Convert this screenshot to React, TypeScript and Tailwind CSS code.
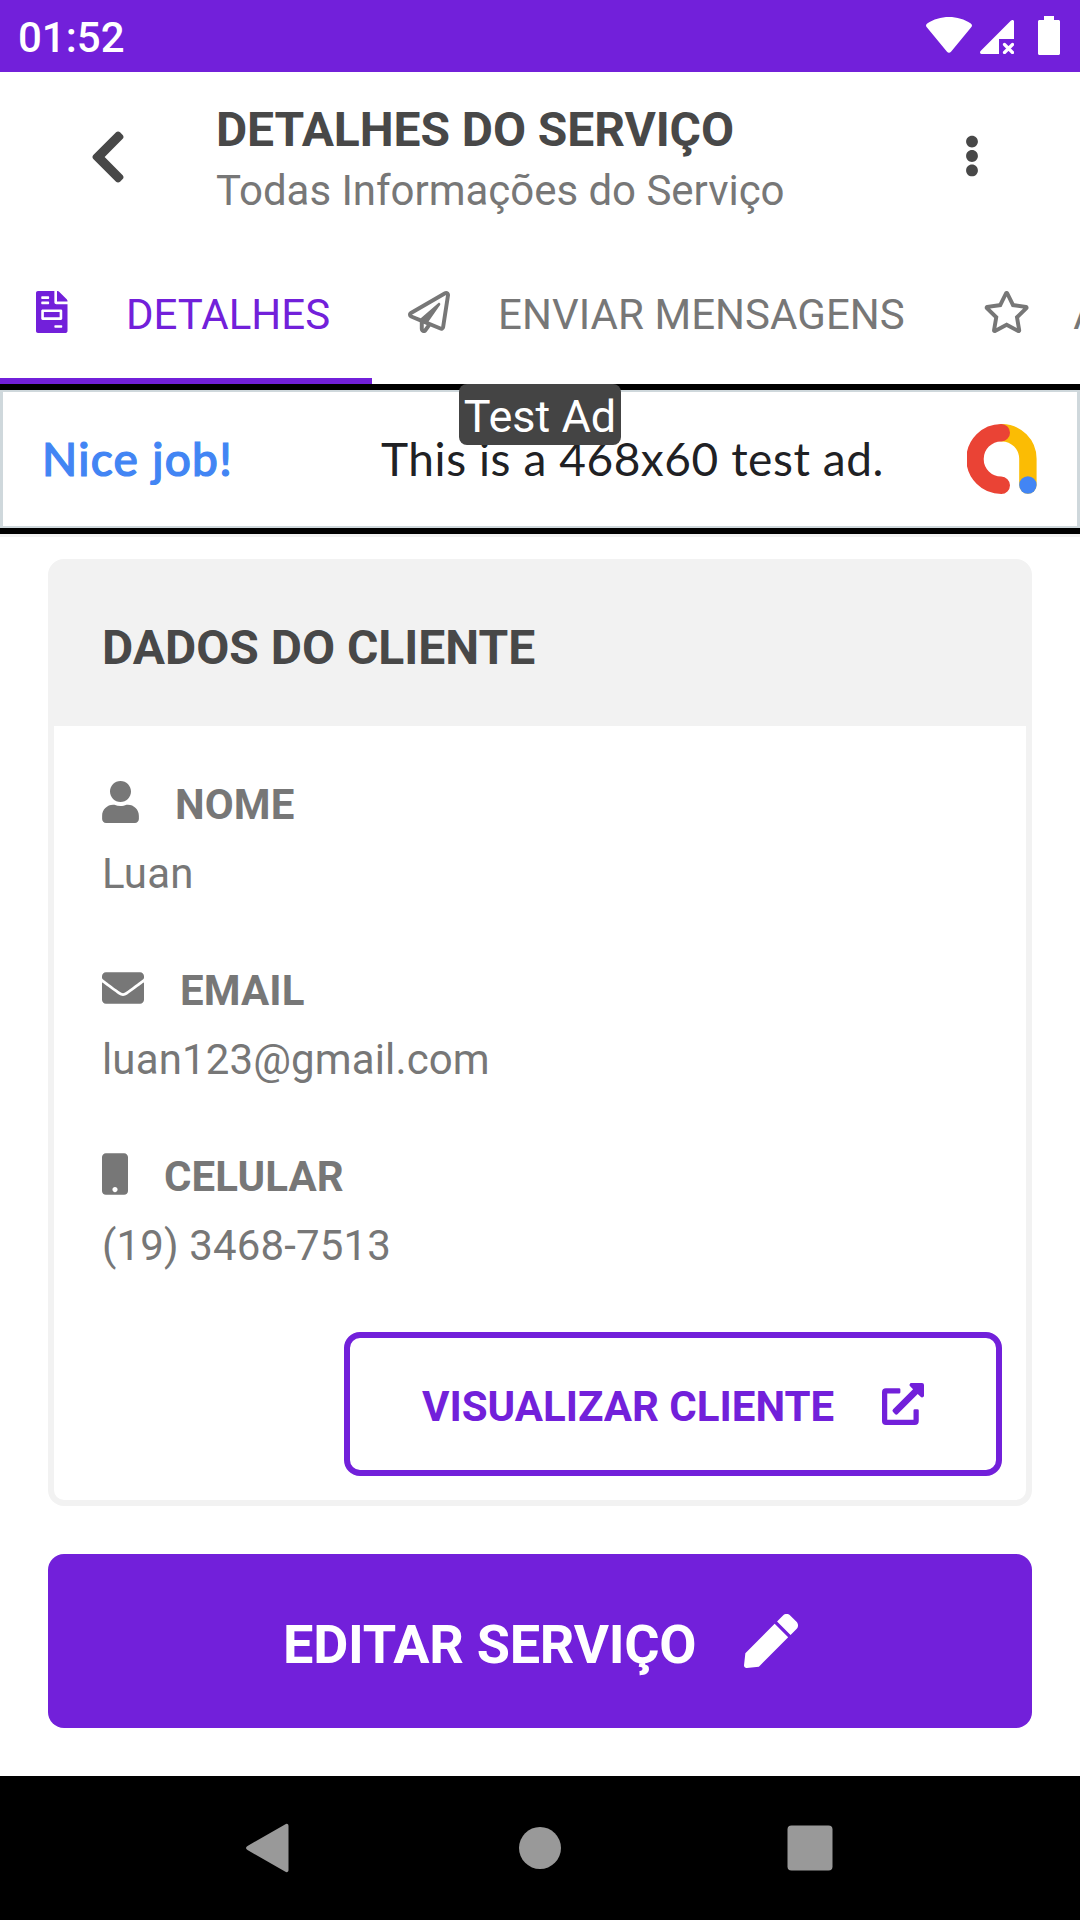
import React from "react";
import {
  FaChevronLeft,
  FaEllipsisV,
  FaEnvelope,
  FaExternalLinkAlt,
  FaFileInvoice,
  FaMobile,
  FaPen,
  FaRegPaperPlane,
  FaRegStar,
  FaUser,
} from "react-icons/fa";

function StatusBar() {
  return (
    <div className="flex h-[72px] shrink-0 items-center justify-between bg-[#7220DA] pr-5 pl-[18px] text-white">
      <span className="pt-1 text-[42px] leading-[50px] font-medium">01:52</span>
      <div className="flex h-full items-start">
        <svg className="mt-[17px] h-9 w-[46px]" viewBox="0 0 46 36" fill="currentColor">
          <path d="M1 10.500C-.4 9.300-.3 7.600 1.200 6.600 7.500 2.300 15 0 23 0s15.500 2.300 21.800 6.600c1.500 1 1.600 2.700.2 3.900L25 34.800c-1.200 1.400-2.800 1.400-4 0Z" />
        </svg>
        <svg className="mt-5 ml-2 h-[34px] w-[34px]" viewBox="0 0 34 34">
          <path d="M34 1.500V19H19v15H1.500C0 34-.5 32 .6 31L31 .6C32.200-.5 34 0 34 1.500Z" fill="currentColor" />
          <path d="m24.500 24.500 8 8m0-8-8 8" stroke="currentColor" strokeWidth="3.200" strokeLinecap="round" />
        </svg>
        <svg className="mt-4 ml-6 h-[39px] w-[22px]" viewBox="0 0 22 39" fill="currentColor">
          <path d="M6 0h10v4h4.500c.8 0 1.500.7 1.500 1.500v32c0 .8-.7 1.500-1.500 1.500h-19C.7 39 0 38.300 0 37.500v-32C0 4.700.7 4 1.500 4H6Z" />
        </svg>
      </div>
    </div>
  );
}

function Header() {
  return (
    <header className="flex h-[168px] shrink-0 items-start text-[#484848]">
      <div className="flex h-full w-[216px] items-center justify-center pt-px">
        <FaChevronLeft className="h-[60px] w-[38px]" />
      </div>
      <div className="flex-1 pt-[25px]">
        <h1 className="text-[48px] leading-[66px] font-bold tracking-[-0.08px] whitespace-nowrap">DETALHES DO SERVIÇO</h1>
        <p className="text-[42px] leading-[56px] tracking-[-0.03px] text-[#777777]">Todas Informações do Serviço</p>
      </div>
      <div className="flex h-full w-[216px] items-center justify-center">
        <FaEllipsisV className="h-[42px] w-4" />
      </div>
    </header>
  );
}

function Tabs() {
  return (
    <nav className="flex h-36 shrink-0 overflow-hidden text-[42px] leading-[50px] whitespace-nowrap text-[#777777]">
      <div className="relative flex w-[372px] shrink-0 items-center pl-9 text-[#7220DA]">
        <FaFileInvoice className="h-[42px] w-[31.5px]" />
        <span className="ml-[58.5px] pt-[5px]">DETALHES</span>
        <div className="absolute inset-x-0 bottom-0 h-[6px] bg-[#7220DA]" />
      </div>
      <div className="flex w-[575px] shrink-0 items-center pl-9">
        <FaRegPaperPlane className="size-[42px]" />
        <span className="ml-12 pt-[5px] tracking-[0.05px]">ENVIAR MENSAGENS</span>
      </div>
      <div className="flex shrink-0 items-center pl-9">
        <FaRegStar className="h-[42px] w-[47.250px]" />
        <span className="ml-[43px] pt-[5px]">AVALIAÇÃO</span>
      </div>
    </nav>
  );
}

function AdBanner() {
  return (
    <div className="relative h-[150px] shrink-0 border-y-[6px] border-black font-['Lato',sans-serif]">
      <div className="flex h-full items-center border-x-[3px] border-y-2 border-[#cfd8dc] bg-white pl-[39px]">
        <span className="w-[339px] text-[46px] leading-[56px] font-medium tracking-[1.3px] text-[#4285f4] [-webkit-text-stroke:1.2px_#4285f4]">
          Nice job!
        </span>
        <span className="w-[586px] text-[46px] leading-[56px] tracking-[0.56px] whitespace-nowrap text-[#202124]">This is a 468x60 test ad.</span>
        <svg className="h-[70px] w-[70px]" viewBox="0 0 70 70" fill="none" strokeWidth="17.400" strokeLinecap="round">
          <path d="M34.800 8.700A26.100 26.100 0 0 1 60.900 35v26" stroke="#fbbc04" />
          <path d="M34.300 8.700a26.300 26.300 0 0 0 0 52.600" stroke="#ea4335" />
          <circle cx="60.900" cy="61" r="8.700" fill="#4285f4" />
        </svg>
      </div>
      <div className="absolute -top-[6px] left-[459px] flex h-[61px] w-[162px] items-center justify-center rounded-lg bg-[#444444] pt-[3px] font-['Roboto',sans-serif] text-[45px] leading-none whitespace-nowrap text-white">
        Test Ad
      </div>
    </div>
  );
}

function Field({ icon, label, value }: { icon: React.ReactNode; label: string; value: string }) {
  return (
    <div className="h-[186px] pl-12 text-[42px] text-[#777777]">
      <div className="flex h-[54px] items-center">
        {icon}
        <span className="ml-9 pt-[5px] leading-[50px] font-bold tracking-[0.1px]">{label}</span>
      </div>
      <p className="mt-[17px] leading-[56px] tracking-[0.14px]">{value}</p>
    </div>
  );
}

function ClientCard() {
  return (
    <section className="mx-12 mt-[22px] h-[947px] shrink-0 rounded-[16px] border-[6px] border-[#f2f2f2] bg-white">
      <h2 className="flex h-[161px] items-center bg-[#f2f2f2] pt-[5px] pl-12 text-[48px] leading-[60px] font-bold text-[#484848]">
        DADOS DO CLIENTE
      </h2>
      <div className="pt-[49px]">
        <Field icon={<FaUser className="h-[42px] w-[37px]" />} label="NOME" value="Luan" />
        <Field icon={<FaEnvelope className="size-[42px]" />} label="EMAIL" value="luan123@gmail.com" />
        <Field icon={<FaMobile className="h-[42px] w-[26px]" />} label="CELULAR" value="(19) 3468-7513" />
      </div>
      <button className="mt-[-1px] mr-6 ml-auto flex h-36 w-[658px] items-center rounded-[16px] border-[6px] border-[#7220DA] pl-[72px] text-[42px] leading-[50px] font-bold whitespace-nowrap text-[#7220DA]">
        <span className="w-[460px] pt-[5px] text-left">VISUALIZAR CLIENTE</span>
        <FaExternalLinkAlt className="size-[42px]" />
      </button>
    </section>
  );
}

function NavigationBar() {
  return (
    <div className="mt-12 flex h-36 shrink-0 items-center justify-center bg-black">
      <svg className="h-[50px] w-[588px]" viewBox="0 0 588 50" fill="#999999">
        <path d="M1.500 23 39 1.400C41 .2 42.500 1 42.500 3v44c0 2-1.500 2.800-3.500 1.600L1.500 27c-2-1.200-2-2.800 0-4Z" />
        <circle cx="294" cy="25" r="21" />
        <rect x="541.500" y="2.500" width="45" height="45" rx="4" />
      </svg>
    </div>
  );
}

export default function App() {
  return (
    <div className="flex h-[1920px] w-[1080px] flex-col overflow-hidden bg-white font-['Roboto',sans-serif]">
      <StatusBar />
      <Header />
      <Tabs />
      <AdBanner />
      <div className="h-[3px] shrink-0 bg-[#f2f2f2]" />
      <ClientCard />
      <button className="mx-12 mt-12 flex h-[174px] shrink-0 items-center rounded-[16px] bg-[#7220DA] pl-[235px] text-[54px] leading-[64px] font-bold tracking-[-0.25px] whitespace-nowrap text-white">
        <span className="w-[461px] pt-[7px] text-left">EDITAR SERVIÇO</span>
        <FaPen className="size-[54px]" />
      </button>
      <NavigationBar />
    </div>
  );
}
